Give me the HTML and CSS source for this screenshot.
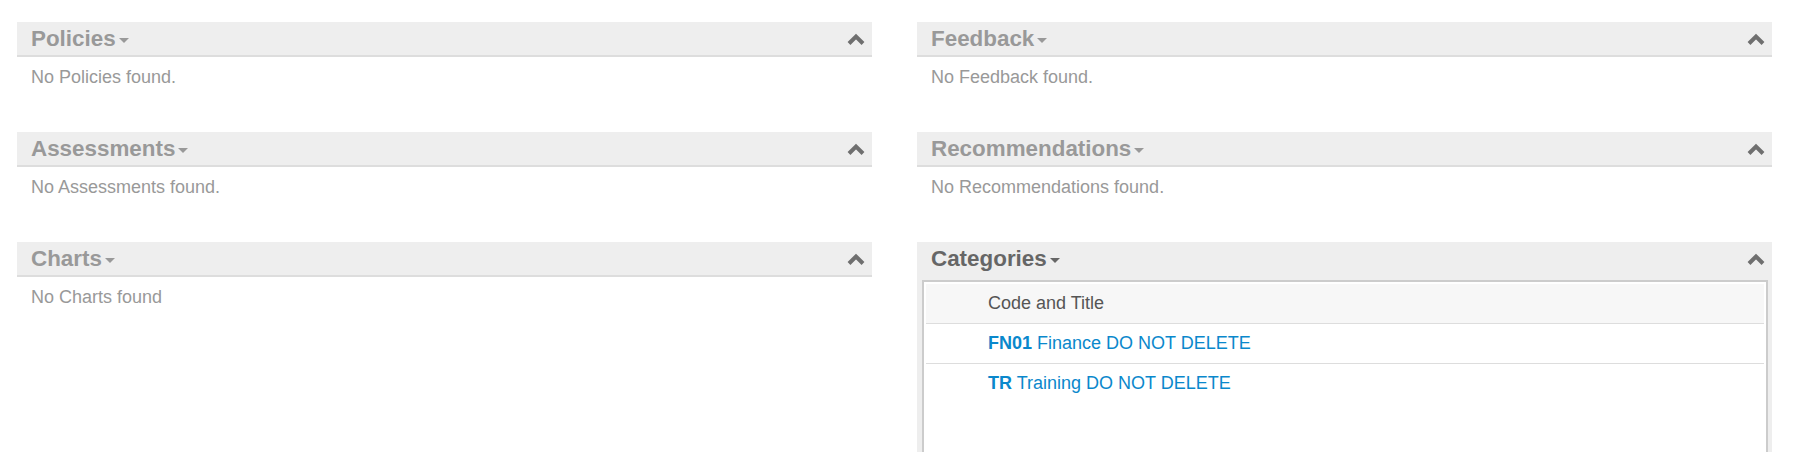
FILE: index.html
```html
<!DOCTYPE html>
<html lang="en">
<head>
<meta charset="utf-8">
<title>Dashboard</title>
<link rel="stylesheet" href="styles.css">
</head>
<body>
<div class="dashboard">
  <div class="col">
    <section class="panel">
      <div class="panel-head">
        <h2 class="panel-title">Policies<span class="caret"></span></h2>
        <span class="toggle"><svg width="18" height="12" viewBox="0 0 18 12"><polyline points="2,10.5 9,3.5 16,10.5" fill="none" stroke="#6f6f6f" stroke-width="4"/></svg></span>
      </div>
      <div class="panel-body">No Policies found.</div>
    </section>
    <section class="panel">
      <div class="panel-head">
        <h2 class="panel-title">Assessments<span class="caret"></span></h2>
        <span class="toggle"><svg width="18" height="12" viewBox="0 0 18 12"><polyline points="2,10.5 9,3.5 16,10.5" fill="none" stroke="#6f6f6f" stroke-width="4"/></svg></span>
      </div>
      <div class="panel-body">No Assessments found.</div>
    </section>
    <section class="panel">
      <div class="panel-head">
        <h2 class="panel-title">Charts<span class="caret"></span></h2>
        <span class="toggle"><svg width="18" height="12" viewBox="0 0 18 12"><polyline points="2,10.5 9,3.5 16,10.5" fill="none" stroke="#6f6f6f" stroke-width="4"/></svg></span>
      </div>
      <div class="panel-body">No Charts found</div>
    </section>
  </div>
  <div class="col">
    <section class="panel">
      <div class="panel-head">
        <h2 class="panel-title">Feedback<span class="caret"></span></h2>
        <span class="toggle"><svg width="18" height="12" viewBox="0 0 18 12"><polyline points="2,10.5 9,3.5 16,10.5" fill="none" stroke="#6f6f6f" stroke-width="4"/></svg></span>
      </div>
      <div class="panel-body">No Feedback found.</div>
    </section>
    <section class="panel">
      <div class="panel-head">
        <h2 class="panel-title">Recommendations<span class="caret"></span></h2>
        <span class="toggle"><svg width="18" height="12" viewBox="0 0 18 12"><polyline points="2,10.5 9,3.5 16,10.5" fill="none" stroke="#6f6f6f" stroke-width="4"/></svg></span>
      </div>
      <div class="panel-body">No Recommendations found.</div>
    </section>
    <section class="panel panel-table">
      <div class="panel-head">
        <h2 class="panel-title">Categories<span class="caret"></span></h2>
        <span class="toggle"><svg width="18" height="12" viewBox="0 0 18 12"><polyline points="2,10.5 9,3.5 16,10.5" fill="none" stroke="#6f6f6f" stroke-width="4"/></svg></span>
      </div>
      <div class="panel-body">
        <div class="table-box">
          <table class="grid">
            <thead>
              <tr><th>Code and Title</th></tr>
            </thead>
            <tbody>
              <tr><td><a href="#"><b>FN01</b> Finance DO NOT DELETE</a></td></tr>
              <tr><td><a href="#"><b>TR</b> Training DO NOT DELETE</a></td></tr>
            </tbody>
          </table>
        </div>
      </div>
    </section>
  </div>
</div>
</body>
</html>
```
FILE: styles.css
```css
html, body {
  margin: 0;
  padding: 0;
  background: #fff;
}
body {
  font-family: "Liberation Sans", Arial, sans-serif;
  font-size: 18px;
  color: #999;
}
.dashboard {
  display: grid;
  grid-template-columns: 855px 855px;
  column-gap: 45px;
  padding: 22px 44px 0 17px;
  align-items: start;
}
.col {
  display: flex;
  flex-direction: column;
}
.panel {
  margin-bottom: 37px;
}
.panel-head {
  display: flex;
  align-items: center;
  justify-content: space-between;
  height: 33px;
  background: #eee;
  border-bottom: 2px solid #ddd;
  padding: 0 7px 0 14px;
}
.panel-title {
  margin: 0;
  font-size: 22.4px;
  font-weight: bold;
  line-height: 33px;
  color: #999;
  display: flex;
  align-items: center;
}
.caret {
  display: inline-block;
  width: 0;
  height: 0;
  margin-left: 3px;
  margin-top: 4px;
  border-top: 5px solid #999;
  border-left: 5px solid transparent;
  border-right: 5px solid transparent;
}
.toggle {
  display: flex;
  align-items: center;
  margin-top: 1px;
}
.panel-body {
  padding: 10px 14px 8px;
  font-size: 18px;
  line-height: 20px;
  color: #999;
}
.panel-table .panel-head {
  border-bottom: none;
}
.panel-table .panel-title {
  color: #666;
}
.panel-table .caret {
  border-top-color: #666;
}
.panel-table .panel-body {
  background: #eee;
  padding: 5px 4px 0 5px;
}
.table-box {
  background: #fff;
  border: 2px solid #ccc;
  padding: 2px;
  min-height: 220px;
}
.grid {
  width: 100%;
  border-collapse: collapse;
  font-size: 18px;
  line-height: 21px;
}
.grid th {
  background: #f7f7f7;
  font-weight: normal;
  color: #555;
  text-align: left;
  padding: 9px 12px 9px 62px;
  border-bottom: 1px solid #ddd;
}
.grid td {
  padding: 9px 12px 9px 62px;
  border-bottom: 1px solid #ddd;
}
.grid tr:last-child td {
  border-bottom: none;
}
.grid a {
  color: #0a88cc;
  text-decoration: none;
}
```
